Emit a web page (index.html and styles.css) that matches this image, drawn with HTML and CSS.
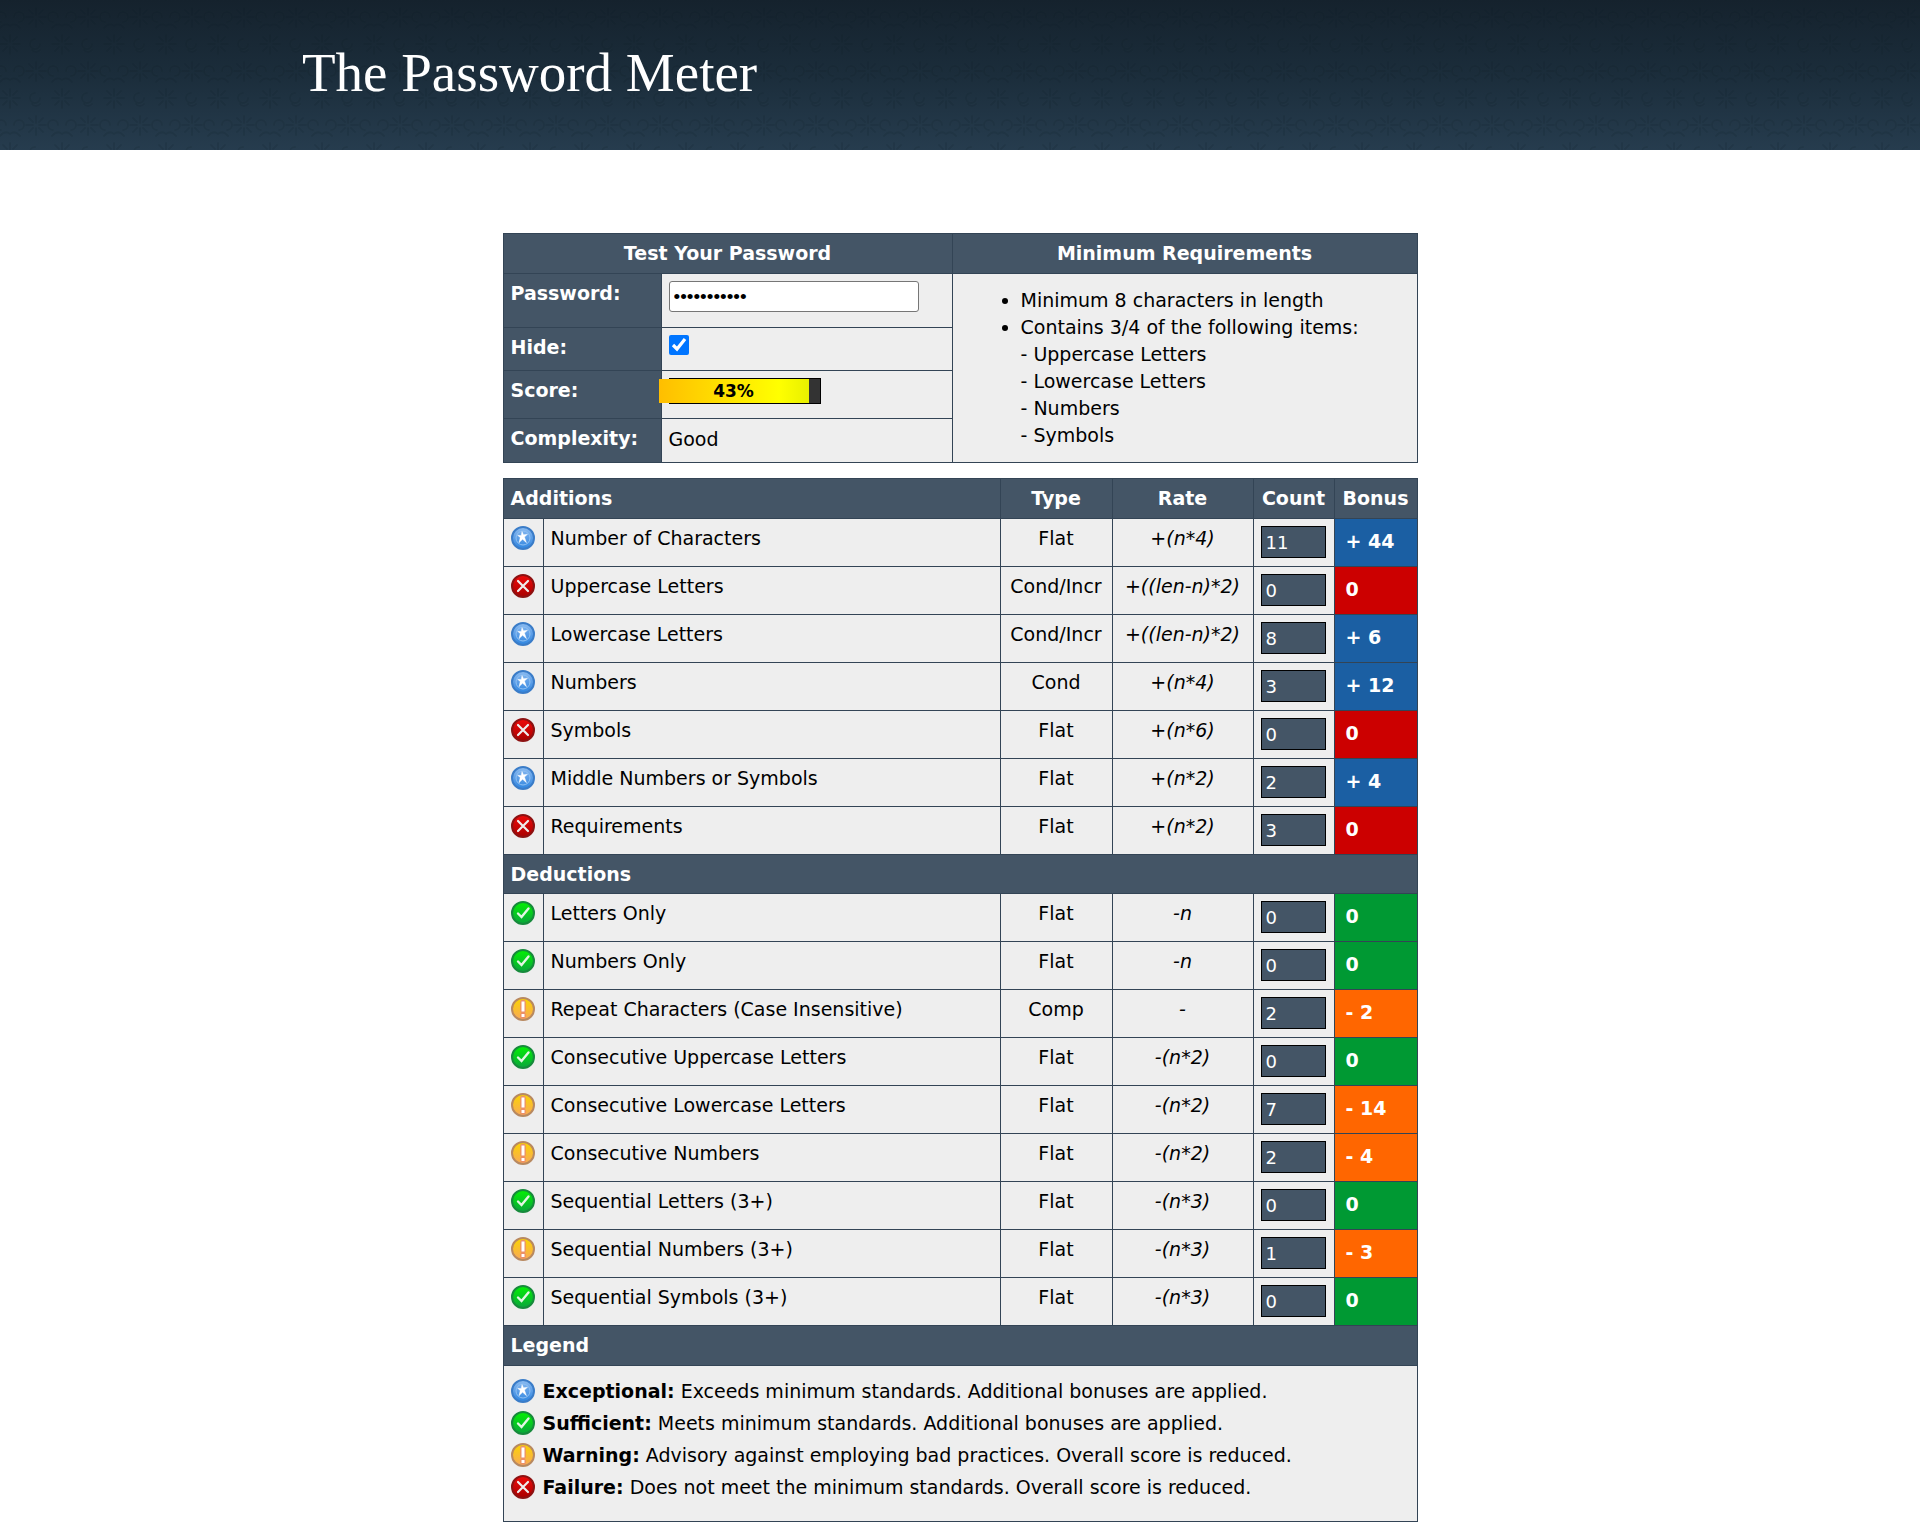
FILE: index.html
```html
<!DOCTYPE html>
<html lang="en">
<head>
<meta charset="utf-8">
<title>The Password Meter</title>
<link rel="stylesheet" href="styles.css">
</head>
<body>
<svg class="defs" aria-hidden="true">
  <defs>
    <linearGradient id="g-blue" x1="0" y1="0" x2="0" y2="1"><stop offset="0" stop-color="#8dbcf0"/><stop offset="0.5" stop-color="#5d9fe8"/><stop offset="1" stop-color="#2f86e0"/></linearGradient>
    <linearGradient id="g-red" x1="0" y1="0" x2="0" y2="1"><stop offset="0" stop-color="#ee0b0b"/><stop offset="1" stop-color="#a80000"/></linearGradient>
    <linearGradient id="g-green" x1="0" y1="0" x2="0" y2="1"><stop offset="0" stop-color="#04f004"/><stop offset="1" stop-color="#0aa53c"/></linearGradient>
    <linearGradient id="g-gold" x1="0" y1="0" x2="0" y2="1"><stop offset="0" stop-color="#fbd500"/><stop offset="1" stop-color="#f8a85a"/></linearGradient>
    <symbol id="exceed" viewBox="0 0 24 24"><circle cx="12" cy="12" r="11" fill="url(#g-blue)" stroke="#3a7cc8" stroke-width="2"/><circle cx="12" cy="12" r="7" fill="none" stroke="#8fc0f2" stroke-width="1"/><path d="M11 5.5l1.5 3.2 4-.4-3 2.8 2 5.6-3.9-3.4-3.6 3.4 1.2-5.2-2.6-2.2 3.6.2z" fill="#fff" stroke="#fff" stroke-width=".4"/></symbol>
    <symbol id="fail" viewBox="0 0 24 24"><circle cx="12" cy="12" r="11" fill="url(#g-red)" stroke="#8d1212" stroke-width="2"/><path d="M7 7l10 10M17 7L7 17" stroke="#eee" stroke-width="2.2" stroke-linecap="round"/></symbol>
    <symbol id="pass" viewBox="0 0 24 24"><circle cx="12" cy="12" r="11" fill="url(#g-green)" stroke="#178a3c" stroke-width="2"/><path d="M7 12.5l3.5 3.5 7-8.5" fill="none" stroke="#e4f6e4" stroke-width="2.4" stroke-linecap="round"/></symbol>
    <symbol id="warn" viewBox="0 0 24 24"><circle cx="12" cy="12" r="11" fill="url(#g-gold)" stroke="#b88960" stroke-width="2"/><path d="M12 5.5v8M12 18v1" stroke="#ec9068" stroke-width="5.6" stroke-linecap="round"/><path d="M12 4.5v10M12 17v3" stroke="#fff" stroke-width="3"/></symbol>
  </defs>
</svg>
<header class="banner"><div class="banner-inner"><h1>The Password Meter</h1></div></header>
<main class="content">
  <table class="grid test">
    <colgroup><col class="c-label"><col class="c-field"><col></colgroup>
    <thead><tr><th colspan="2">Test Your Password</th><th>Minimum Requirements</th></tr></thead>
    <tbody>
      <tr class="r-pass"><th><label for="pwd">Password:</label></th><td><input class="pwd" id="pwd" type="password" value="password123"></td>
        <td rowspan="4"><ul class="reqs"><li>Minimum 8 characters in length</li><li>Contains 3/4 of the following items:<br>- Uppercase Letters<br>- Lowercase Letters<br>- Numbers<br>- Symbols</li></ul></td></tr>
      <tr class="r-hide"><th><label for="hide">Hide:</label></th><td><input class="hide" id="hide" type="checkbox" checked></td></tr>
      <tr class="r-score"><th>Score:</th><td><div class="score"><div class="score-fill">43%</div></div></td></tr>
      <tr class="r-complex"><th>Complexity:</th><td>Good</td></tr>
    </tbody>
  </table>
  <table class="grid results">
    <colgroup><col class="c-icon"><col><col class="c-type"><col class="c-rate"><col class="c-count"><col class="c-bonus"></colgroup>
    <thead><tr><th class="left" colspan="2">Additions</th><th>Type</th><th>Rate</th><th>Count</th><th>Bonus</th></tr></thead>
    <tbody id="additions"></tbody>
    <tbody><tr class="section"><th class="left" colspan="6">Deductions</th></tr></tbody>
    <tbody id="deductions"></tbody>
    <tbody>
      <tr class="head"><th class="left" colspan="6">Legend</th></tr>
      <tr><td class="legend-cell" colspan="6"><ul class="legend">
        <li><svg class="icon"><use href="#exceed"/></svg><span><strong>Exceptional:</strong> Exceeds minimum standards. Additional bonuses are applied.</span></li>
        <li><svg class="icon"><use href="#pass"/></svg><span><strong>Sufficient:</strong> Meets minimum standards. Additional bonuses are applied.</span></li>
        <li><svg class="icon"><use href="#warn"/></svg><span><strong>Warning:</strong> Advisory against employing bad practices. Overall score is reduced.</span></li>
        <li><svg class="icon"><use href="#fail"/></svg><span><strong>Failure:</strong> Does not meet the minimum standards. Overall score is reduced.</span></li>
      </ul></td></tr>
    </tbody>
  </table>
</main>
<script src="script.js"></script>
</body>
</html>
```
FILE: styles.css
```css
* { box-sizing: border-box; }
body { margin: 0; background: #fff; color: #000; font: 19px/26px Verdana, "DejaVu Sans", sans-serif; }
.defs { position: absolute; width: 0; height: 0; }
.banner {
  height: 150px;
  background:
    url("data:image/svg+xml,%3Csvg xmlns='http://www.w3.org/2000/svg' width='52' height='54'%3E%3Cg fill='none' stroke='%230a1620' stroke-opacity='.13' stroke-width='2' stroke-linecap='round'%3E%3Cpath d='M26 4v7M26 23v-7M16 13h7M36 13h-7M19 6l4 4M33 6l-4 4M19 20l4-4M33 20l-4-4M0 31v7M0 50v-7M52 31v7M52 50v-7M10 40H3M42 40h7M7 33l-4 4M45 33l4 4M7 47l-4-4M45 47l4-4'/%3E%3Cpath d='M4 13a5 5 0 1 1 5 5M48 13a5 5 0 1 0-5 5M30 40a5 5 0 1 1-5-5M22 46a5 5 0 0 0 8 0M0 22q5-4 10 2M52 22q-5-4-10 2'/%3E%3C/g%3E%3C/svg%3E") 10px 4px,
    linear-gradient(#15222d, #1b2d3b 50%, #263c4e);
}
.banner-inner { max-width: 1316px; margin: 0 auto; padding-top: 40px; }
h1 { margin: 0; color: #fff; font: 55px/66px Georgia, "Liberation Serif", serif; }
.content { max-width: 915px; margin: 83px auto 0; }
.grid { width: 100%; border-collapse: collapse; table-layout: fixed; background: #eee; }
.grid th, .grid td { border: 1px solid #345; padding: 7px; vertical-align: top; text-align: left; }
.grid th { background: #456; color: #fff; padding: 6px 7px; }
.grid thead th { height: 40px; text-align: center; }
.grid thead .left { text-align: left; }
.c-label { width: 158px; }
.c-field { width: 291px; }
.r-pass { height: 54px; }
.r-hide { height: 43px; }
.r-score { height: 48px; }
.r-complex { height: 44px; }
.pwd { display: block; width: 250px; height: 31px; padding: 0 4px; border: 1px solid #767676; border-radius: 3px; font: 19px/28px "Liberation Sans", Arial, sans-serif; }
.hide { display: block; width: 20px; height: 20px; margin: 0; accent-color: #0075ff; }
.score { width: 152px; height: 26px; border: 1px solid #000; background: #333; }
.score-fill { position: relative; width: 150px; margin-left: -11px; background: linear-gradient(90deg, #ffbe00, #ff0 80%, #e8f000); text-align: center; font-size: 17px; font-weight: bold; line-height: 24px; }
.reqs { margin: 6px 0 0; padding-left: 61px; line-height: 27px; }
.results { margin-top: 15px; }
.c-icon { width: 40px; }
.c-type { width: 112px; }
.c-rate { width: 141px; }
.c-count { width: 81px; }
.c-bonus { width: 83px; }
.item { height: 48px; }
.section { height: 39px; }
.head { height: 40px; }
.icon { display: block; flex: none; width: 24px; height: 24px; }
.item .name, .item .type, .item .rate { padding-top: 6px; }
.item .type, .item .rate { text-align: center; padding-left: 0; padding-right: 0; white-space: nowrap; }
.rate { font-style: italic; }
.count { display: block; width: 65px; height: 32px; padding: 0 4px; border: 1px solid #000; background: #456; color: #fff; font: 18px/30px Verdana, "DejaVu Sans", sans-serif; }
.item .bonus { color: #fff; font-weight: bold; padding: 9px 11px 0; }
.item .exceed { background: #1b5fa3; }
.item .fail { background: #c00; }
.item .pass { background: #093; }
.item .warn { background: #f60; }
.grid .legend-cell { padding: 13px 7px 22px; }
.legend { display: grid; row-gap: 8px; margin: 0; padding: 0; list-style: none; }
.legend li { display: flex; column-gap: 8px; line-height: 24px; }
```
FILE: script.js
```
const additions = [
  ["exceed", "Number of Characters", "Flat", "+(n*4)", "11", "+ 44"],
  ["fail", "Uppercase Letters", "Cond/Incr", "+((len-n)*2)", "0", "0"],
  ["exceed", "Lowercase Letters", "Cond/Incr", "+((len-n)*2)", "8", "+ 6"],
  ["exceed", "Numbers", "Cond", "+(n*4)", "3", "+ 12"],
  ["fail", "Symbols", "Flat", "+(n*6)", "0", "0"],
  ["exceed", "Middle Numbers or Symbols", "Flat", "+(n*2)", "2", "+ 4"],
  ["fail", "Requirements", "Flat", "+(n*2)", "3", "0"]
];
const deductions = [
  ["pass", "Letters Only", "Flat", "-n", "0", "0"],
  ["pass", "Numbers Only", "Flat", "-n", "0", "0"],
  ["warn", "Repeat Characters (Case Insensitive)", "Comp", "-", "2", "- 2"],
  ["pass", "Consecutive Uppercase Letters", "Flat", "-(n*2)", "0", "0"],
  ["warn", "Consecutive Lowercase Letters", "Flat", "-(n*2)", "7", "- 14"],
  ["warn", "Consecutive Numbers", "Flat", "-(n*2)", "2", "- 4"],
  ["pass", "Sequential Letters (3+)", "Flat", "-(n*3)", "0", "0"],
  ["warn", "Sequential Numbers (3+)", "Flat", "-(n*3)", "1", "- 3"],
  ["pass", "Sequential Symbols (3+)", "Flat", "-(n*3)", "0", "0"]
];
function fill(id, rows) {
  document.getElementById(id).innerHTML = rows.map(([state, name, type, rate, count, bonus]) =>
    `<tr class="item"><td><svg class="icon"><use href="#${state}"/></svg></td><td class="name">${name}</td>` +
    `<td class="type">${type}</td><td class="rate">${rate}</td>` +
    `<td><input class="count" type="text" value="${count}" aria-label="${name} count" readonly></td>` +
    `<td class="bonus ${state}">${bonus}</td></tr>`).join("");
}
fill("additions", additions);
fill("deductions", deductions);
```
